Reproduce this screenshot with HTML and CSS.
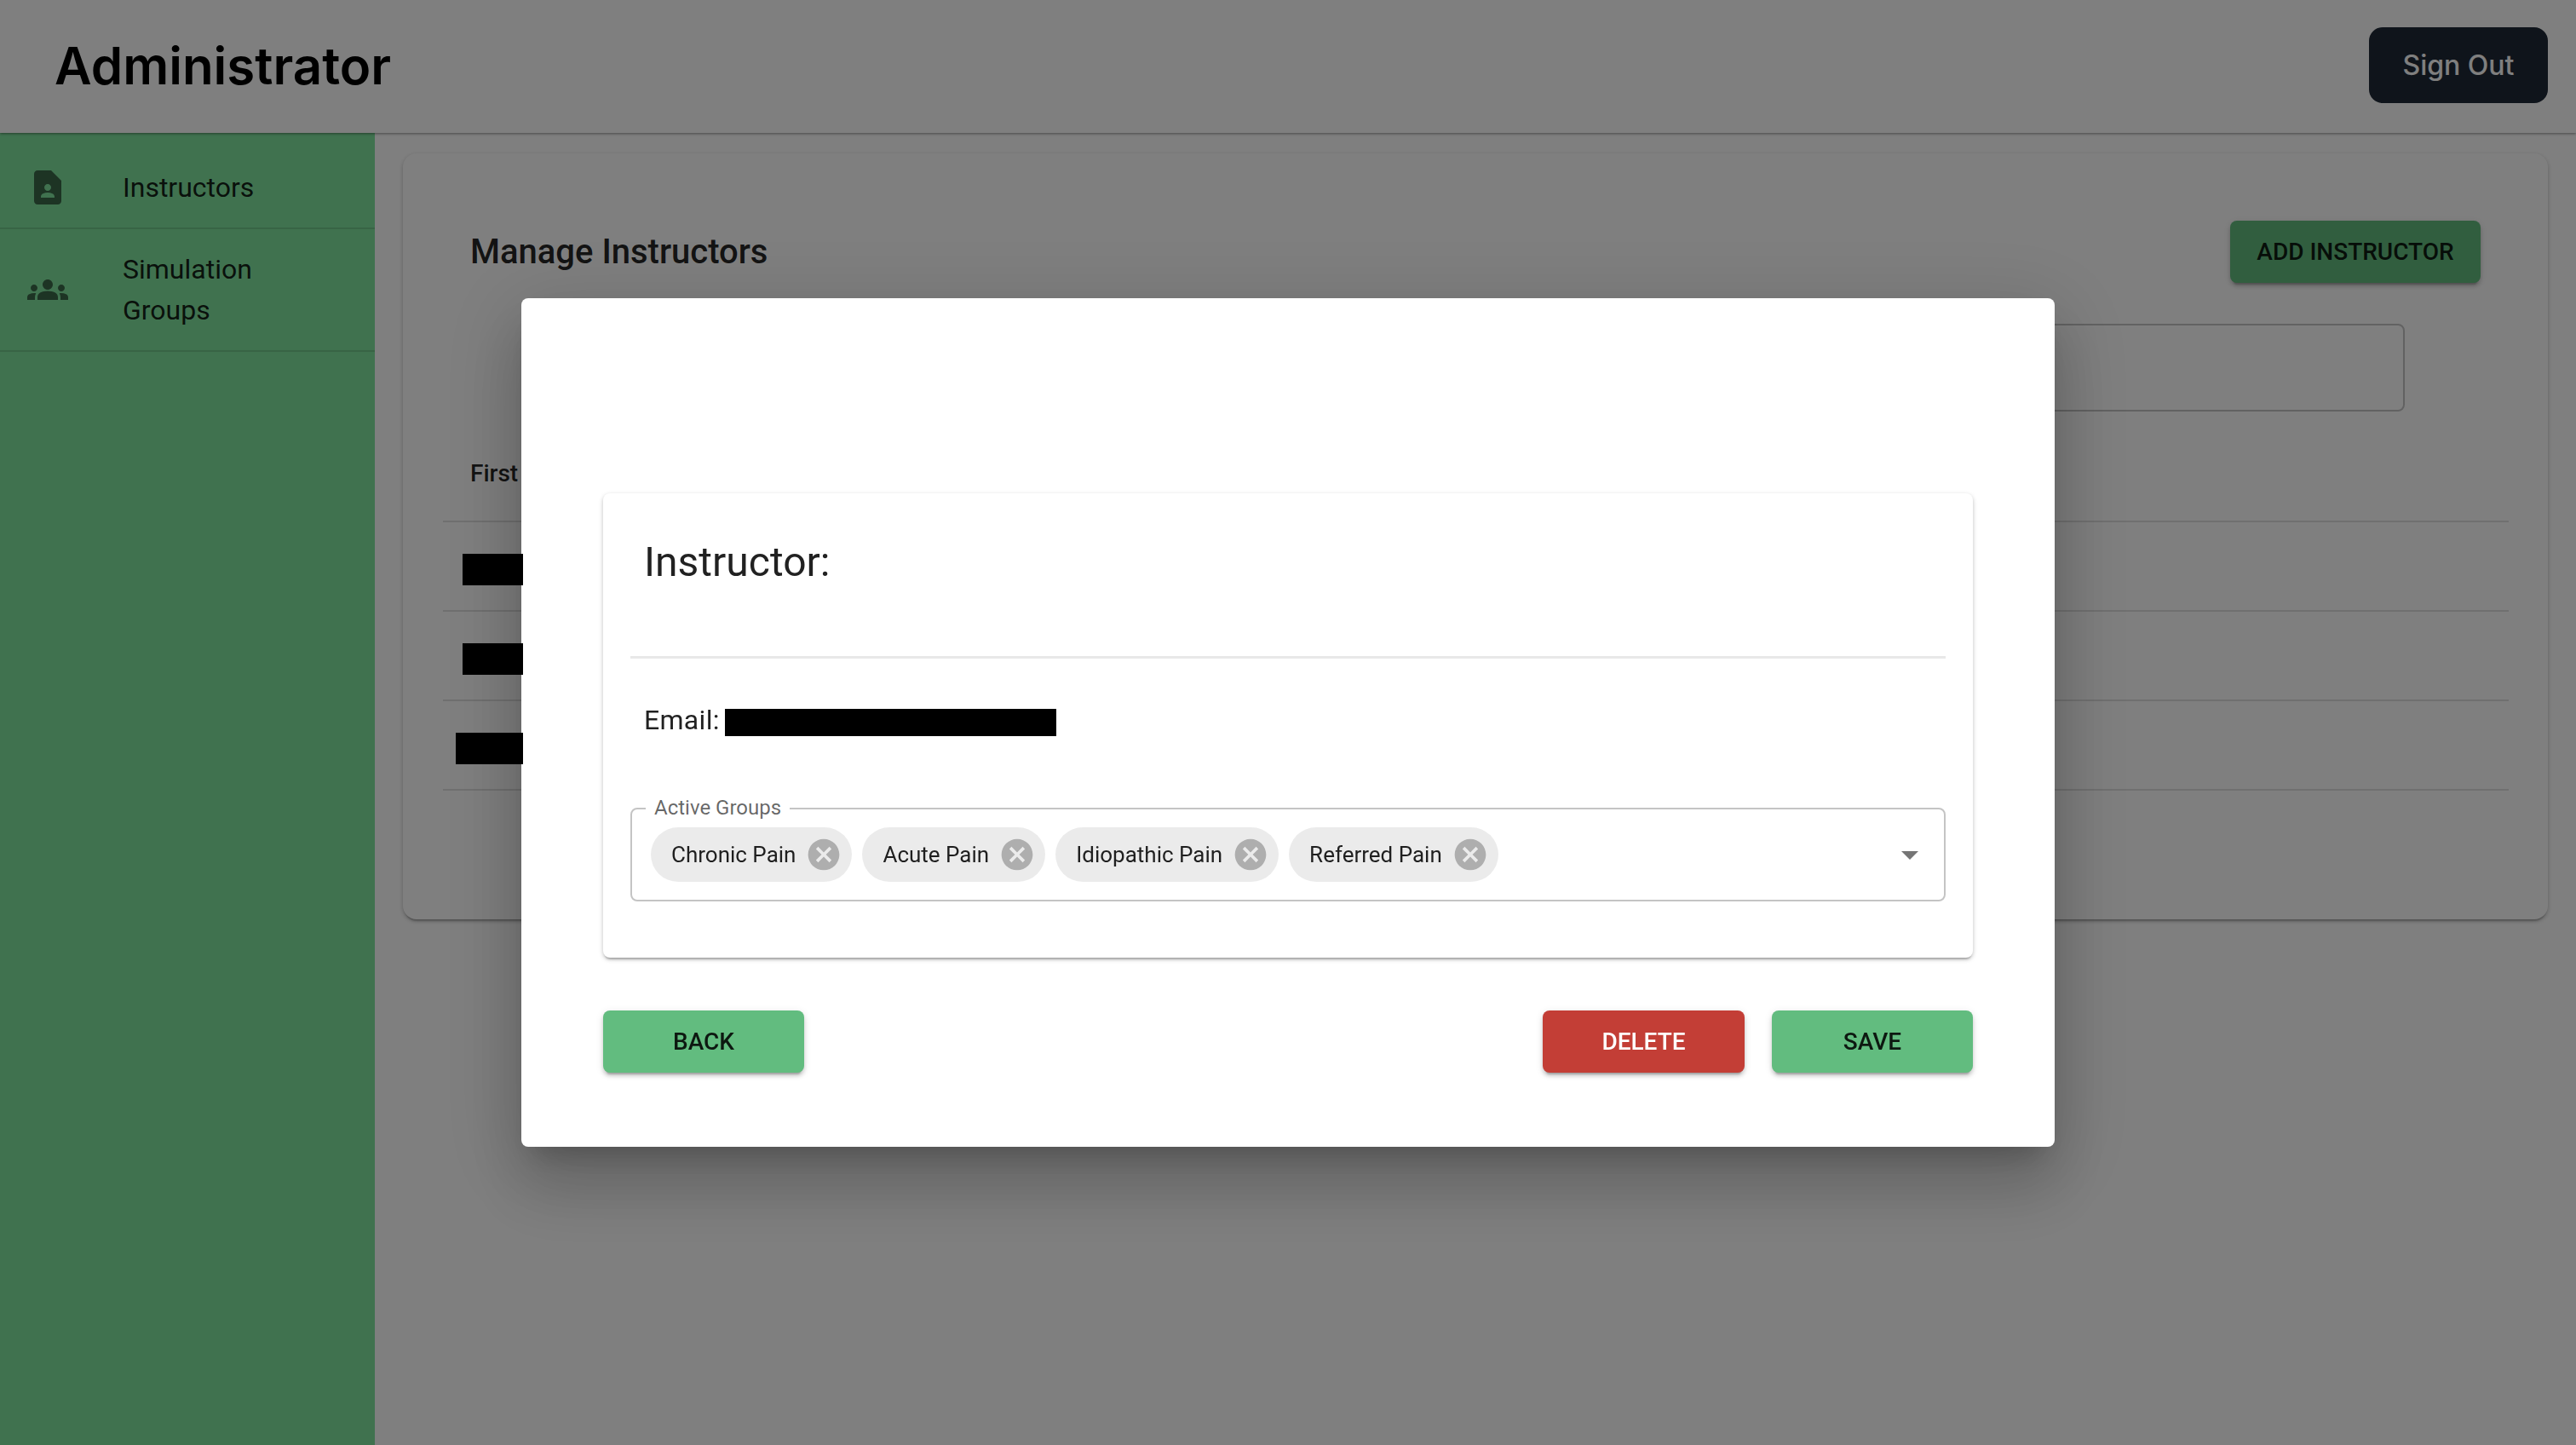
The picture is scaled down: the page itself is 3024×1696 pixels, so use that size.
FILE: index.html
```html
<!DOCTYPE html>
<html lang="en">
<head>
<meta charset="utf-8">
<title>Administrator</title>
<link rel="stylesheet" href="styles.css">
</head>
<body>
<div class="app">
  <header class="topbar">
    <h1 class="brand">Administrator</h1>
    <button class="signout">Sign Out</button>
  </header>
  <div class="body-row">
    <nav class="sidebar">
      <a class="nav-item">
        <span class="nav-icon"><svg viewBox="0 0 24 24"><path d="M14 2H6c-1.1 0-2 .9-2 2v16c0 1.1.9 2 2 2h12c1.1 0 2-.9 2-2V8l-6-6zm-2 8c1.1 0 2 .9 2 2s-.9 2-2 2-2-.9-2-2 .9-2 2-2zm4 8H8v-.57c0-.81.48-1.53 1.22-1.85.85-.37 1.79-.58 2.78-.58.99 0 1.93.21 2.78.58.74.32 1.22 1.04 1.22 1.85V18z"/></svg></span>
        <span class="nav-label">Instructors</span>
      </a>
      <a class="nav-item">
        <span class="nav-icon"><svg viewBox="0 0 24 24"><path d="M12 12.75c1.63 0 3.07.39 4.24.9 1.08.48 1.76 1.56 1.76 2.73V18H6v-1.61c0-1.18.68-2.26 1.76-2.73 1.17-.52 2.61-.91 4.24-.91zM4 13c1.1 0 2-.9 2-2s-.9-2-2-2-2 .9-2 2 .9 2 2 2zm1.13 1.1c-.37-.06-.74-.1-1.13-.1-.99 0-1.93.21-2.78.58C.48 14.9 0 15.62 0 16.43V18h4.5v-1.61c0-.83.23-1.61.63-2.29zM20 13c1.1 0 2-.9 2-2s-.9-2-2-2-2 .9-2 2 .9 2 2 2zm4 3.43c0-.81-.48-1.53-1.22-1.85-.85-.37-1.79-.58-2.78-.58-.39 0-.76.04-1.13.1.4.68.63 1.46.63 2.29V18H24v-1.57zM12 6c1.66 0 3 1.34 3 3s-1.34 3-3 3-3-1.34-3-3 1.34-3 3-3z"/></svg></span>
        <span class="nav-label">Simulation<br>Groups</span>
      </a>
    </nav>
    <main class="main">
      <section class="card">
        <div class="title-row">
          <h2 class="page-title">Manage Instructors</h2>
          <button class="btn btn-add">Add Instructor</button>
        </div>
        <div class="search"></div>
        <div class="table">
          <div class="table-head">First</div>
          <div class="table-row"></div>
          <div class="table-row"></div>
          <div class="table-row"></div>
        </div>
      </section>
    </main>
  </div>
</div>
<div class="overlay">
  <div class="modal">
    <section class="inner-card">
      <h3 class="inner-title">Instructor:</h3>
      <hr class="divider">
      <div class="email"><span>Email:</span><span class="redact-email"></span></div>
      <div class="select">
        <span class="select-label">Active Groups</span>
        <span class="chip"><span class="chip-text">Chronic Pain</span><svg class="chip-x" viewBox="0 0 24 24"><path d="M12 2C6.47 2 2 6.47 2 12s4.47 10 10 10 10-4.47 10-10S17.53 2 12 2zm5 13.59L15.59 17 12 13.41 8.41 17 7 15.59 10.59 12 7 8.41 8.41 7 12 10.59 15.59 7 17 8.41 13.41 12 17 15.59z"/></svg></span>
        <span class="chip"><span class="chip-text">Acute Pain</span><svg class="chip-x" viewBox="0 0 24 24"><path d="M12 2C6.47 2 2 6.47 2 12s4.47 10 10 10 10-4.47 10-10S17.53 2 12 2zm5 13.59L15.59 17 12 13.41 8.41 17 7 15.59 10.59 12 7 8.41 8.41 7 12 10.59 15.59 7 17 8.41 13.41 12 17 15.59z"/></svg></span>
        <span class="chip"><span class="chip-text">Idiopathic Pain</span><svg class="chip-x" viewBox="0 0 24 24"><path d="M12 2C6.47 2 2 6.47 2 12s4.47 10 10 10 10-4.47 10-10S17.53 2 12 2zm5 13.59L15.59 17 12 13.41 8.41 17 7 15.59 10.59 12 7 8.41 8.41 7 12 10.59 15.59 7 17 8.41 13.41 12 17 15.59z"/></svg></span>
        <span class="chip"><span class="chip-text">Referred Pain</span><svg class="chip-x" viewBox="0 0 24 24"><path d="M12 2C6.47 2 2 6.47 2 12s4.47 10 10 10 10-4.47 10-10S17.53 2 12 2zm5 13.59L15.59 17 12 13.41 8.41 17 7 15.59 10.59 12 7 8.41 8.41 7 12 10.59 15.59 7 17 8.41 13.41 12 17 15.59z"/></svg></span>
        <svg class="select-arrow" viewBox="0 0 24 24"><path d="M7 10l5 5 5-5z"/></svg>
      </div>
    </section>
    <div class="actions">
      <button class="btn btn-green">Back</button>
      <span class="actions-space"></span>
      <button class="btn btn-red">Delete</button>
      <button class="btn btn-green">Save</button>
    </div>
  </div>
  <span class="redact redact-a"></span>
  <span class="redact redact-b"></span>
  <span class="redact redact-c"></span>
</div>
</body>
</html>
```
FILE: styles.css
```css
* { box-sizing: border-box; }
html, body { margin: 0; padding: 0; height: 100%; overflow: hidden; background: #fff; }
body { font-family: Roboto, "Liberation Sans", sans-serif; color: rgba(0,0,0,.87); }
h1, h2, h3 { margin: 0; }
button { font-family: inherit; border: 0; cursor: pointer; }

.app { display: flex; flex-direction: column; height: 1696px; }

.topbar {
  position: relative; z-index: 2;
  flex: 0 0 156px; display: flex; align-items: center; justify-content: space-between;
  padding: 0 33px 3px 64px; background: #fff;
  box-shadow: 0 1px 3px rgba(0,0,0,.45);
}
.brand { font-family: Inter, Roboto, sans-serif; font-size: 60px; line-height: 72px; font-weight: 600; color: #000; }
.signout {
  width: 210px; height: 89px; border-radius: 16px; background: #1f2937; color: #fff;
  font-family: Inter, Roboto, sans-serif; font-size: 32px; font-weight: 500;
}

.body-row { flex: 1; display: flex; min-height: 0; }

.sidebar { flex: 0 0 440px; background: #80e49f; padding-top: 16px; }
.nav-item { display: flex; align-items: center; padding: 24px 32px; border-bottom: 2px solid rgba(0,0,0,.12); }
.nav-item:first-child { padding: 0 32px 0; height: 97px; }
.nav-item:nth-child(2) { height: 144px; }
.nav-icon { flex: 0 0 112px; display: flex; }
.nav-icon svg { width: 48px; height: 48px; fill: rgba(0,0,0,.54); }
.nav-label { font-size: 32px; line-height: 48px; }

.main { flex: 1; padding: 24px 33px 0; min-width: 0; }
.card {
  height: 899px; padding: 79px 46px 0 47px; background: #fff; border-radius: 16px;
  box-shadow: 0 4px 2px -2px rgba(0,0,0,.2), 0 2px 4px rgba(0,0,0,.14), 0 2px 6px rgba(0,0,0,.12);
}
.title-row { display: flex; align-items: center; justify-content: space-between; height: 73px; padding: 0 33px 0 32px; }
.page-title { font-size: 40px; font-weight: 500; line-height: 56px; }
.search { width: 2182px; height: 103px; margin: 48px 0 0 121px; border: 2px solid rgba(0,0,0,.23); border-radius: 8px; }
.table { margin-top: 16px; }
.table-head {
  height: 114px; padding-left: 32px; display: flex; align-items: center;
  font-size: 28px; font-weight: 500; border-bottom: 2px solid #e0e0e0;
}
.table-row { height: 105px; border-bottom: 2px solid #e0e0e0; }

.btn {
  height: 73px; border-radius: 8px; font-size: 28px; font-weight: 500;
  text-transform: uppercase; color: rgba(0,0,0,.87);
  box-shadow: 0 6px 2px -4px rgba(0,0,0,.2), 0 4px 4px rgba(0,0,0,.14), 0 2px 10px rgba(0,0,0,.12);
}
.btn-add { width: 294px; background: #62bc7f; }
.btn-green { width: 236px; background: #62bc7f; }
.btn-red { width: 237px; background: #c33e36; color: #fff; }

.overlay {
  position: fixed; inset: 0; z-index: 10; display: flex; align-items: center; justify-content: center;
  background: rgba(0,0,0,.5);
}
.modal {
  width: 1800px; height: 996px; padding: 229px 96px 0; background: #fff; border-radius: 8px;
  box-shadow: 0 22px 30px -14px rgba(0,0,0,.2), 0 48px 76px 6px rgba(0,0,0,.14), 0 18px 92px 16px rgba(0,0,0,.12);
}
.inner-card {
  height: 545px; padding: 49px 32px 0; background: #fff; border-radius: 8px;
  box-shadow: 0 4px 2px -2px rgba(0,0,0,.2), 0 2px 4px rgba(0,0,0,.14), 0 2px 6px rgba(0,0,0,.12);
}
.inner-title { font-size: 48px; line-height: 64px; font-weight: 400; padding-left: 16px; }
.divider { height: 3px; margin: 78px 0 0; border: 0; background: #e8e8e8; }
.email { display: flex; align-items: center; height: 48px; margin-top: 48px; padding-left: 16px; font-size: 32px; letter-spacing: .3px; }
.redact-email { width: 389px; height: 32px; margin: 5px 0 0 6px; background: #000; }

.select {
  position: relative; display: flex; align-items: center; gap: 12px;
  height: 110px; margin-top: 79px; padding-left: 22px;
  border: 2px solid rgba(0,0,0,.23); border-radius: 8px;
}
.select-label {
  position: absolute; left: 16px; top: -17px; padding: 0 10px; background: #fff;
  font-size: 24px; line-height: 30px; color: rgba(0,0,0,.6);
}
.chip {
  display: inline-flex; align-items: center; height: 64px; border-radius: 32px;
  background: rgba(0,0,0,.08); padding-left: 24px; padding-right: 11px;
  font-size: 26px; gap: 11px;
}
.chip-x { width: 44px; height: 44px; fill: rgba(0,0,0,.26); }
.select-arrow { position: absolute; right: 16px; top: 29px; width: 48px; height: 48px; fill: rgba(0,0,0,.54); }

.actions { display: flex; gap: 32px; margin-top: 62px; }
.actions-space { flex: 1; }

.redact { position: absolute; background: #000; height: 37px; }
.redact-a { left: 543px; top: 650px; width: 71px; }
.redact-b { left: 543px; top: 755px; width: 71px; }
.redact-c { left: 535px; top: 860px; width: 79px; }
```
